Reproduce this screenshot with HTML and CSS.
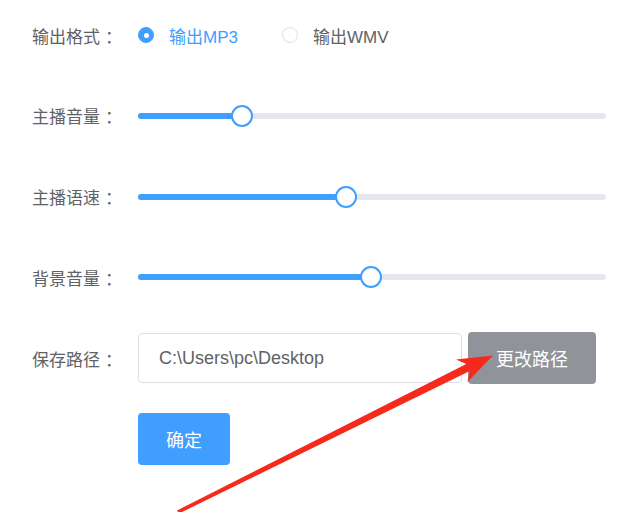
FILE: index.html
```html
<!DOCTYPE html>
<html lang="zh-CN">
<head>
  <meta charset="UTF-8" />
  <meta name="viewport" content="width=device-width, initial-scale=1.0" />
  <title>导出设置</title>
  <link rel="stylesheet" href="styles.css">
</head>
<body>
  <form class="form">
    <div class="form-item">
      <label class="form-label">输出格式<span class="colon">：</span></label>
      <div class="form-content">
        <span class="radio checked">
          <span class="radio-inner"></span>
          <span class="radio-label">输出MP3</span>
        </span>
        <span class="radio">
          <span class="radio-inner"></span>
          <span class="radio-label">输出WMV</span>
        </span>
      </div>
    </div>

    <div class="form-item">
      <label class="form-label">主播音量<span class="colon">：</span></label>
      <div class="form-content">
        <div class="slider">
          <div class="slider-bar" style="width: 22.2%"></div>
          <div class="slider-thumb" style="left: 22.2%"></div>
        </div>
      </div>
    </div>

    <div class="form-item">
      <label class="form-label">主播语速<span class="colon">：</span></label>
      <div class="form-content">
        <div class="slider">
          <div class="slider-bar" style="width: 44.4%"></div>
          <div class="slider-thumb" style="left: 44.4%"></div>
        </div>
      </div>
    </div>

    <div class="form-item">
      <label class="form-label">背景音量<span class="colon">：</span></label>
      <div class="form-content">
        <div class="slider">
          <div class="slider-bar" style="width: 49.8%"></div>
          <div class="slider-thumb" style="left: 49.8%"></div>
        </div>
      </div>
    </div>

    <div class="form-item">
      <label class="form-label">保存路径<span class="colon">：</span></label>
      <div class="form-content">
        <input class="path-input" type="text" value="C:\Users\pc\Desktop">
        <button type="button" class="btn btn-gray">更改路径</button>
      </div>
    </div>

    <div class="form-item">
      <label class="form-label"></label>
      <div class="form-content">
        <button type="button" class="btn btn-primary">确定</button>
      </div>
    </div>
  </form>

  <!-- annotation arrow drawn over the screenshot -->
  <svg class="arrow" width="618" height="512" viewBox="0 0 618 512">
    <polygon fill="#f52a1c" points="177,510.5 466.3,364 456,359.5 493,355.5 467.5,382 469.8,371 179,513.5" />
  </svg>
</body>
</html>
```

FILE: styles.css
```css
body {
  margin: 0;
  background-color: #fff;
  font-family: "Liberation Sans", "Noto Sans CJK SC", sans-serif;
  color: #606266;
  position: relative;
  width: 618px;
  height: 512px;
  overflow: hidden;
}

.form {
  padding: 9px 0 0 32px;
}

.form-item {
  display: flex;
  align-items: center;
  height: 52px;
  margin-bottom: 28.8px;
}

.form-label {
  width: 106px;
  flex-shrink: 0;
  font-size: 17px;
  color: #606266;
}

.colon {
  padding-left: 5px;
}

.form-content {
  display: flex;
  align-items: center;
}

.radio {
  display: flex;
  align-items: center;
  margin-right: 44px;
  font-size: 17px;
  color: #606266;
  cursor: pointer;
}

.radio-inner {
  width: 16px;
  height: 16px;
  border: 1px solid #dcdfe6;
  border-radius: 50%;
  box-sizing: border-box;
  background-color: #fff;
  position: relative;
}

.radio.checked .radio-inner {
  border-color: #409eff;
  background-color: #409eff;
}

.radio.checked .radio-inner::after {
  content: "";
  position: absolute;
  left: 50%;
  top: 50%;
  width: 5px;
  height: 5px;
  margin: -2.5px 0 0 -2.5px;
  border-radius: 50%;
  background-color: #fff;
}

.radio-label {
  padding-left: 15px;
}

.radio.checked .radio-label {
  color: #409eff;
}

.slider {
  position: relative;
  width: 468px;
  height: 6px;
  border-radius: 3px;
  background-color: #e4e7ed;
}

.slider-bar {
  height: 100%;
  border-radius: 3px;
  background-color: #409eff;
}

.slider-thumb {
  position: absolute;
  top: 50%;
  width: 22px;
  height: 22px;
  margin: -11px 0 0 -11px;
  box-sizing: border-box;
  border: 2.5px solid #409eff;
  border-radius: 50%;
  background-color: #fff;
}

.path-input {
  width: 324px;
  height: 50px;
  box-sizing: border-box;
  border: 1px solid #dcdfe6;
  border-radius: 4px;
  padding: 0 20px;
  font-family: "Liberation Sans", "Noto Sans CJK SC", sans-serif;
  font-size: 18px;
  color: #606266;
  outline: none;
}

.btn {
  height: 52px;
  border: none;
  border-radius: 4px;
  font-family: "Liberation Sans", "Noto Sans CJK SC", sans-serif;
  font-size: 18px;
  color: #fff;
  cursor: pointer;
}

.btn-gray {
  width: 128px;
  margin-left: 6px;
  background-color: #909399;
}

.btn-primary {
  width: 92px;
  background-color: #409eff;
}

.arrow {
  position: absolute;
  left: 0;
  top: 0;
  pointer-events: none;
}
```
